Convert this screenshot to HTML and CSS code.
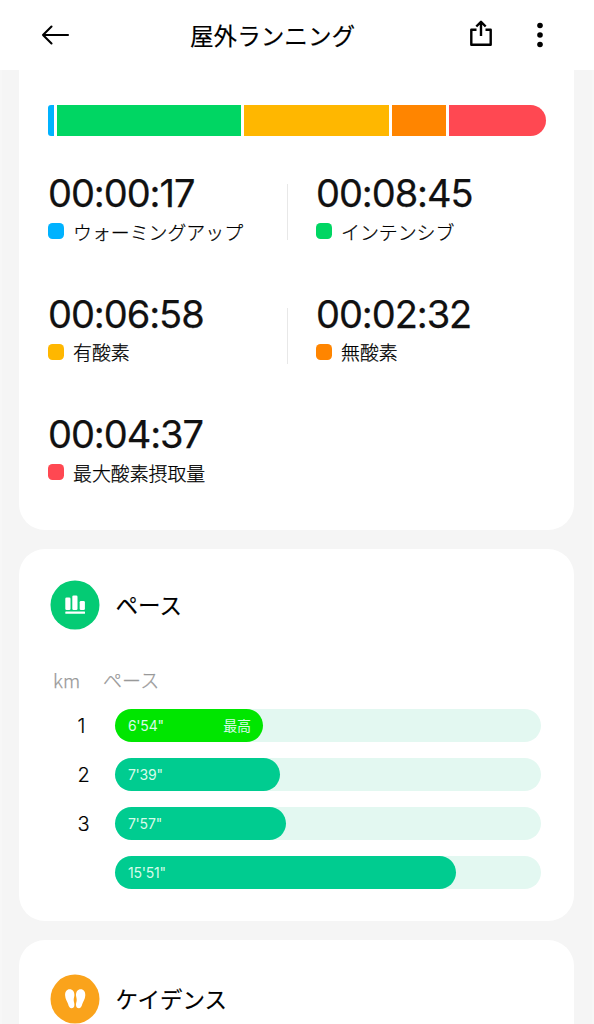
FILE: index.html
```html
<!DOCTYPE html>
<html lang="ja">
<head>
<meta charset="utf-8">
<title>屋外ランニング</title>
<link rel="stylesheet" href="styles.css">
</head>
<body>
<header class="topbar">
  <svg class="back" width="30" height="24" viewBox="0 0 30 24"><path d="M27 12H2M10.500 3.500L2 12l8.500 8.500"/></svg>
  <h1 class="title">屋外ランニング</h1>
  <svg class="share" width="26" height="30" viewBox="0 0 26 30"><path d="M8.500 10.700H3.300v15.100h19.400V10.700h-5.200M13 17V3.500M8.300 7.500L13 2.800 17.700 7.500"/></svg>
  <svg class="more" width="8" height="26" viewBox="0 0 8 26"><circle cx="4" cy="3.500" r="2.800"/><circle cx="4" cy="13" r="2.800"/><circle cx="4" cy="22.500" r="2.800"/></svg>
</header>
<main class="content">
  <section class="card zones">
    <div class="zone-bar">
      <span class="seg warm"></span><span class="seg intensive"></span><span class="seg aerobic"></span><span class="seg anaerobic"></span><span class="seg vo2"></span>
    </div>
    <div class="zone-grid">
      <div class="zone divided"><div class="time">00:00:17</div><div class="label"><i class="dot warm"></i>ウォーミングアップ</div></div>
      <div class="zone"><div class="time">00:08:45</div><div class="label"><i class="dot intensive"></i>インテンシブ</div></div>
      <div class="zone divided lower"><div class="time">00:06:58</div><div class="label"><i class="dot aerobic"></i>有酸素</div></div>
      <div class="zone"><div class="time">00:02:32</div><div class="label"><i class="dot anaerobic"></i>無酸素</div></div>
      <div class="zone"><div class="time">00:04:37</div><div class="label"><i class="dot vo2"></i>最大酸素摂取量</div></div>
    </div>
  </section>
  <section class="card pace">
    <div class="card-head">
      <svg width="50" height="50" viewBox="0 0 50 50"><circle cx="25" cy="25" r="24.500" fill="#04cb74"/><g fill="#fff"><rect x="15.300" y="17.500" width="5.200" height="12.500" rx="1.300"/><rect x="22.300" y="15.500" width="5.200" height="14.500" rx="1.300"/><rect x="29.700" y="21" width="5.200" height="9" rx="1.300"/><rect x="15.300" y="31.500" width="19.700" height="2.200" rx=".5"/></g></svg>
      <h2>ペース</h2>
    </div>
    <div class="pace-labels"><span>km</span><span>ペース</span></div>
    <div class="pace-row"><span class="km">1</span><div class="track"><div class="fill best" style="width:148px"><span>6'54"</span><span>最高</span></div></div></div>
    <div class="pace-row"><span class="km">2</span><div class="track"><div class="fill" style="width:165px"><span>7'39"</span></div></div></div>
    <div class="pace-row"><span class="km">3</span><div class="track"><div class="fill" style="width:171px"><span>7'57"</span></div></div></div>
    <div class="pace-row"><span class="km"></span><div class="track"><div class="fill" style="width:340.500px"><span>15'51"</span></div></div></div>
  </section>
  <section class="card cadence">
    <div class="card-head">
      <svg width="50" height="50" viewBox="0 0 50 50"><circle cx="25" cy="25" r="24.500" fill="#faa31b"/><g fill="#fff"><path id="sole" d="M19.600 15.300c3.200 0 4.900 2.600 4.800 6-.1 2-.8 3-.7 5 .1 1.800.8 2.800.7 4.800-.1 2.200-1.200 3.200-2.800 3.200-1.900 0-2.900-1.700-3.500-4.200-.7-2.600-2.900-4.800-3-8.900-.1-3.400 1.700-5.900 4.500-5.900z"/><use href="#sole" transform="matrix(-1 0 0 1 50.400 0)"/></g></svg>
      <h2>ケイデンス</h2>
    </div>
  </section>
</main>
</body>
</html>
```
FILE: styles.css
```css
* { box-sizing: border-box; }
body {
  margin: 0;
  height: 1024px;
  overflow: hidden;
  background: #f5f5f5;
  color: #000;
  font-family: Inter, "Noto Sans CJK JP", sans-serif;
}
h1, h2 {
  margin: 0;
  font-weight: 400;
  font-family: "Noto Sans CJK JP", sans-serif;
  -webkit-text-stroke: 0.15px #000;
}
.topbar {
  display: grid;
  grid-template-columns: 190px 278px 66px 60px;
  align-items: center;
  height: 70px;
  background: #fff;
}
.topbar svg { fill: none; stroke: #000; stroke-width: 2.1; stroke-linecap: round; stroke-linejoin: round; }
.topbar .back { margin-left: 41px; }
.topbar .share { stroke-width: 2.4; stroke-linecap: butt; margin-bottom: 2px; }
.topbar .more { fill: #000; stroke: none; margin-left: 1.5px; }
.title { font-size: 23.6px; line-height: 34px; white-space: nowrap; }
.content {
  display: flex;
  flex-direction: column;
  gap: 19px;
  padding: 0 18px 0 17px;
  border: solid #f7f7f7;
  border-width: 0 2px;
}
.card { flex: none; background: #fff; border-radius: 26px; }
.zones { height: 460px; padding: 35px 28px 0 29px; border-radius: 0 0 26px 26px; }
.zone-bar {
  display: grid;
  grid-template-columns: 6px 183.5px 145.5px 54px 96.5px;
  gap: 3px;
  height: 31px;
}
.seg:first-child { border-radius: 3px 0 0 3px; }
.seg:last-child { border-radius: 0 15.5px 15.5px 0; }
.warm { background: #00b2ff; }
.intensive { background: #00d663; }
.aerobic { background: #ffb700; }
.anaerobic { background: #ff8500; }
.vo2 { background: #ff4852; }
.zone-grid {
  display: grid;
  grid-template-columns: 240px 1fr;
  grid-auto-rows: 120.5px;
  column-gap: 28px;
  padding-top: 34px;
}
.zone.divided {
  background: linear-gradient(#e8e8e8, #e8e8e8) right 14px / 1px 56px no-repeat;
}
.zone.lower { background-position: right 17.5px; }
.time {
  font-size: 38px;
  line-height: 46px;
  letter-spacing: -1.05px;
  font-weight: 400;
  color: #111;
  -webkit-text-stroke: 0.25px #111;
}
.label {
  display: flex;
  align-items: center;
  gap: 9px;
  height: 30px;
  font: 300 18.9px/29px "Noto Sans CJK JP", sans-serif;
  -webkit-text-stroke: 0.25px #000;
}
.dot { width: 16px; height: 16px; border-radius: 4.5px; }
.pace { height: 372px; padding: 31px 33px 0 31px; }
.card-head { display: flex; align-items: center; gap: 15.5px; }
.card-head h2 { font-size: 22.5px; line-height: 34px; margin-top: -2px; }
.pace-labels {
  display: flex;
  gap: 23px;
  height: 30px;
  margin: 35px 0 14px 3px;
  color: #999;
  font: 300 19px/30px "Noto Sans CJK JP", sans-serif;
  -webkit-text-stroke: 0.25px #999;
}
.pace-row { display: flex; height: 33px; margin-bottom: 16px; }
.km { width: 65.4px; padding-left: 27.5px; font: 300 20px/35px Inter, sans-serif; -webkit-text-stroke: 0.15px #000; }
.track { flex: 1; border-radius: 17px; background: #e3f8f1; }
.fill {
  display: flex;
  justify-content: space-between;
  height: 33px;
  padding: 0 12.5px;
  border-radius: 17px;
  background: #00cc90;
  color: #d8fbea;
  font-size: 14px;
  line-height: 33px;
  letter-spacing: -0.2px;
}
.best { background: #00e600; }
.cadence { height: 120px; padding: 34px 31px 0; }
```
